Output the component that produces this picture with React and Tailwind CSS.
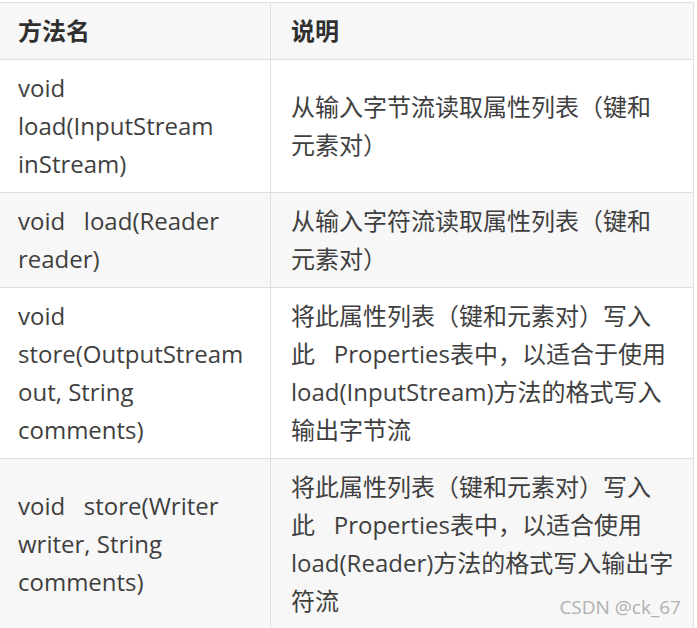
const font = {
  fontFamily: '"Open Sans", "Noto Sans CJK SC", sans-serif',
};

const rows = [
  {
    method: ["void", "load(InputStream", "inStream)"],
    desc: ["从输入字节流读取属性列表（键和", "元素对）"],
  },
  {
    method: ["void\u00a0\u00a0 load(Reader", "reader)"],
    desc: ["从输入字符流读取属性列表（键和", "元素对）"],
  },
  {
    method: ["void", "store(OutputStream", "out, String", "comments)"],
    desc: [
      "将此属性列表（键和元素对）写入",
      "此\u00a0\u00a0 Properties表中，以适合于使用",
      "load(InputStream)方法的格式写入",
      "输出字节流",
    ],
  },
  {
    method: ["void\u00a0\u00a0 store(Writer", "writer, String", "comments)"],
    desc: [
      "将此属性列表（键和元素对）写入",
      "此\u00a0\u00a0 Properties表中，以适合使用",
      "load(Reader)方法的格式写入输出字",
      "符流",
    ],
  },
];

const Lines = ({ lines }) =>
  lines.map((l, i) => (
    <span key={i} className="block whitespace-nowrap">
      {l}
    </span>
  ));

export default function App() {
  return (
    <div
      className="relative w-[697px] h-[628px] overflow-hidden bg-white text-[24px] leading-[38px] text-[#3f3f3f]"
      style={font}
    >
      <table className="table-fixed border-collapse ml-[-2px] mt-[2px] w-[696px]">
        <colgroup>
          <col className="w-[272px]" />
          <col />
        </colgroup>
        <thead>
          <tr className="bg-[#f7f7f7]">
            <th className="border border-[#dfdfdf] pl-[19px] pr-5 py-[9px] text-left font-bold text-[#2f2f2f]">
              方法名
            </th>
            <th className="border border-[#dfdfdf] px-5 py-[9px] text-left font-bold text-[#2f2f2f]">
              说明
            </th>
          </tr>
        </thead>
        <tbody>
          {rows.map((r, i) => (
            <tr key={i} className={i % 2 === 1 ? "bg-[#f7f7f7]" : "bg-white"}>
              <td className="border border-[#dfdfdf] pl-[19px] pr-5 py-[9px] align-middle">
                <Lines lines={r.method} />
              </td>
              <td className="border border-[#dfdfdf] px-5 py-[9px] align-middle">
                <Lines lines={r.desc} />
              </td>
            </tr>
          ))}
        </tbody>
      </table>
      <div className="absolute right-[16px] top-[593px] text-[19px] leading-[28px] text-[#b0b0b0]">
        CSDN @ck_67
      </div>
    </div>
  );
}
